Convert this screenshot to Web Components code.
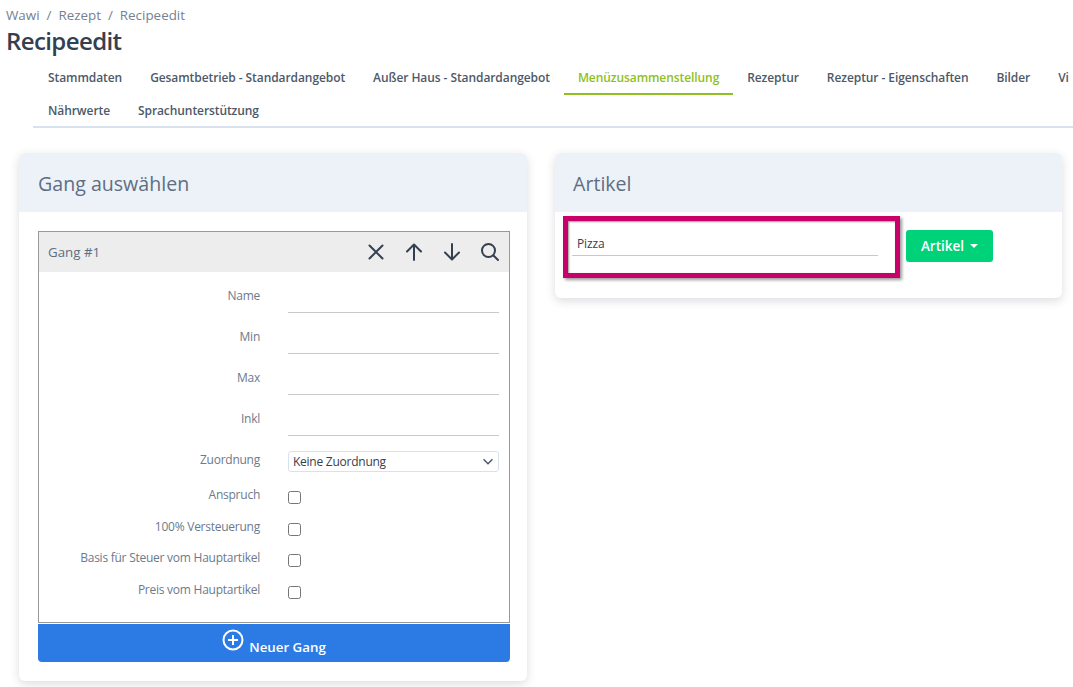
<!DOCTYPE html>
<html lang="de">
<head>
<meta charset="utf-8">
<title>Recipeedit</title>
<style>
  html, body { margin: 0; height: 100%; background: #fff; overflow: hidden; }
  body { color: #5e6e82; font-family: 'Open Sans', 'Noto Sans', Arial, sans-serif; }
</style>
</head>
<body>
<rf-page-head crumbs="Wawi / Rezept / Recipeedit" heading="Recipeedit"></rf-page-head>
<rf-tabs>
  <rf-tab>Stammdaten</rf-tab>
  <rf-tab>Gesamtbetrieb - Standardangebot</rf-tab>
  <rf-tab>Außer Haus - Standardangebot</rf-tab>
  <rf-tab active>Menüzusammenstellung</rf-tab>
  <rf-tab>Rezeptur</rf-tab>
  <rf-tab>Rezeptur - Eigenschaften</rf-tab>
  <rf-tab>Bilder</rf-tab>
  <rf-tab>Vi</rf-tab>
  <rf-tab slot="second">Nährwerte</rf-tab>
  <rf-tab slot="second">Sprachunterstützung</rf-tab>
</rf-tabs>
<rf-columns>
  <rf-card heading="Gang auswählen">
    <rf-gang heading="Gang #1">
      <rf-field label="Name"><rf-line></rf-line></rf-field>
      <rf-field label="Min"><rf-line></rf-line></rf-field>
      <rf-field label="Max"><rf-line></rf-line></rf-field>
      <rf-field label="Inkl"><rf-line></rf-line></rf-field>
      <rf-field label="Zuordnung" kind="select"><rf-select>Keine Zuordnung</rf-select></rf-field>
      <rf-field label="Anspruch" kind="check"><rf-check></rf-check></rf-field>
      <rf-field label="100% Versteuerung" kind="check"><rf-check></rf-check></rf-field>
      <rf-field label="Basis für Steuer vom Hauptartikel" kind="check"><rf-check></rf-check></rf-field>
      <rf-field label="Preis vom Hauptartikel" kind="check"><rf-check></rf-check></rf-field>
    </rf-gang>
    <rf-add-button>Neuer Gang</rf-add-button>
  </rf-card>
  <rf-card heading="Artikel" compact>
    <rf-article-search value="Pizza" action="Artikel"></rf-article-search>
  </rf-card>
</rf-columns>

<script>
  const FONT = `'Open Sans', 'Noto Sans', Arial, sans-serif`;

  // Small helper, every element below is the same shape
  function define( name, css, html, setup ) {
    customElements.define( name, class extends HTMLElement {
      constructor() {
        super();
        this.attachShadow( {mode: 'open'} );
        this.shadowRoot.innerHTML = `<style>${css}</style>${typeof html === 'function' ? html( this ) : html}`;
      }
      connectedCallback() {
        if( setup ) setup( this, this.shadowRoot );
      }
    } );
  }

  define( 'rf-page-head', `
    :host { display: flex; flex-direction: column; padding: 7px 0 0 6px; height: 55px; box-sizing: border-box; font-family: ${FONT}; }
    p { margin: 0; color: #748194; font-size: 13.400px; line-height: 17px; word-spacing: 3.500px; }
    h1 { margin: 0; color: #344050; font-size: 24px; font-weight: 600; line-height: 34px; letter-spacing: -.6px; }
  `, `<p></p><h1></h1>`, ( el, root ) => {
    root.querySelector( 'p' ).textContent = el.getAttribute( 'crumbs' );
    root.querySelector( 'h1' ).textContent = el.getAttribute( 'heading' );
  } );

  define( 'rf-tabs', `
    :host { display: block; margin: 0 0 0 33px; height: 73px; box-sizing: border-box; padding: 7px 0 0 1px; border-bottom: 2px solid #d8e2ef; overflow: hidden; }
    div { display: flex; flex-wrap: nowrap; height: 33px; white-space: nowrap; }
  `, `<div><slot></slot></div><div><slot name="second"></slot></div>` );

  define( 'rf-tab', `
    :host { display: block; flex: none; height: 33px; box-sizing: border-box; padding: 7px 14px 0; font-family: ${FONT}; font-size: 12px; font-weight: 600; line-height: 17px; letter-spacing: -.08px; color: #4d5969; }
    :host( [active] ) { color: #8fbf21; border-bottom: 2px solid #8fbf21; }
  `, `<slot></slot>` );

  define( 'rf-columns', `
    :host { display: grid; grid-template-columns: 508px 507px; column-gap: 28px; align-items: start; padding: 25px 0 0 19px; }
  `, `<slot></slot>` );

  define( 'rf-card', `
    :host { display: block; background: #fff; border-radius: 6px; box-shadow: 0 3px 10px rgba( 65, 69, 88, .18 ); overflow: hidden; font-family: ${FONT}; }
    header { height: 59px; box-sizing: border-box; background: #edf2f9; padding: 0 19px; color: #5e6e82; font-size: 19.600px; line-height: 61px; }
    section { padding: 19px 17px 19px 19px; }
    :host( [compact] ) header { padding: 0 18px; }
    :host( [compact] ) section { padding: 4px 0 20px 8px; }
  `, `<header></header><section><slot></slot></section>`, ( el, root ) => {
    root.querySelector( 'header' ).textContent = el.getAttribute( 'heading' );
  } );

  define( 'rf-gang', `
    :host { display: block; border: 1px solid #999; height: 392px; box-sizing: border-box; font-family: ${FONT}; }
    header { display: flex; align-items: center; height: 40px; background: #ededed; padding-left: 9px; color: #5e6e82; font-size: 13.300px; }
    span { flex: 1; }
    svg { display: block; width: 24px; height: 24px; margin-right: 14px; fill: none; stroke: #344050; stroke-width: 2; stroke-linecap: round; stroke-linejoin: round; }
    svg:last-child { margin-right: 7px; }
    main { display: flex; flex-direction: column; padding-top: 3px; }
  `, `<header><span></span>
      <svg viewBox="0 0 24 24"><path d="M5.5 5.5l13 13M18.500 5.500l-13 13"/></svg>
      <svg viewBox="0 0 24 24"><path d="M12 20V5M5 11.500L12 4.500l7 7"/></svg>
      <svg viewBox="0 0 24 24"><path d="M12 4v15M5 12.500l7 7 7-7"/></svg>
      <svg viewBox="0 0 24 24"><circle cx="10.500" cy="10.500" r="6.500"/><path d="M15.500 15.500L20 20"/></svg>
    </header><main><slot></slot></main>`, ( el, root ) => {
    root.querySelector( 'span' ).textContent = el.getAttribute( 'heading' );
  } );

  define( 'rf-field', `
    :host { display: grid; grid-template-columns: 221px 211px; column-gap: 28px; height: 41px; font-family: ${FONT}; }
    :host( [kind=select] ) { height: 48px; }
    :host( [kind=check] ) { height: 31.500px; }
    label { text-align: right; font-size: 12px; font-weight: 500; line-height: 16px; letter-spacing: -.25px; color: #6b7a8d; padding-top: 13px; }
    :host( [kind=check] ) label { padding-top: 0; }
  `, `<label></label><div><slot></slot></div>`, ( el, root ) => {
    root.querySelector( 'label' ).textContent = el.getAttribute( 'label' );
  } );

  define( 'rf-line', `
    :host { display: block; height: 38px; box-sizing: border-box; border-bottom: 1px solid #c9c9c9; }
  `, `` );

  define( 'rf-select', `
    :host { display: flex; align-items: center; justify-content: space-between; margin-top: 12px; height: 21px; box-sizing: border-box; border: 1px solid #d8e2ef; border-radius: 3px; padding: 0 4px; color: #344050; font-family: ${FONT}; font-size: 12px; letter-spacing: -.25px; }
    svg { width: 12px; height: 8px; fill: none; stroke: #4d5969; stroke-width: 1.700; }
  `, `<span><slot></slot></span><svg viewBox="0 0 13 9"><path d="M1.500 1.500L6.500 6.500l5-5"/></svg>` );

  define( 'rf-check', `
    :host { display: block; margin-top: 4px; width: 13px; height: 13px; box-sizing: border-box; border: 1px solid #767676; border-radius: 2.500px; }
  `, `` );

  define( 'rf-add-button', `
    :host { display: flex; justify-content: center; height: 38px; margin-top: 1px; background: #2c7be5; border-radius: 0 0 4px 4px; color: #fff; font-family: ${FONT}; font-size: 13.300px; font-weight: 600; }
    svg { width: 22px; height: 22px; margin: 5px 5px 0 0; fill: none; stroke: #fff; stroke-width: 2; }
    span { padding-top: 13px; line-height: 20px; }
  `, `<svg viewBox="0 0 22 22"><circle cx="11" cy="11" r="9.500"/><path d="M11 6v10M6 11h10"/></svg><span><slot></slot></span>` );

  define( 'rf-article-search', `
    :host { display: flex; align-items: flex-start; gap: 6px; font-family: ${FONT}; }
    .mark { width: 337px; height: 62px; box-sizing: border-box; border: 5px solid #c8006a; padding: 4px; box-shadow: 2px 2px 3px rgba( 0, 0, 0, .4 ), inset 1px 1px 2px rgba( 0, 0, 0, .4 ); }
    .input { width: 306px; height: 31px; box-sizing: border-box; border-bottom: 1px solid #c9c9c9; padding: 11px 0 0 5px; color: #344050; font-size: 12px; line-height: 16px; letter-spacing: -.1px; }
    button { display: flex; align-items: center; gap: 6px; margin: 14px 0 0; height: 32px; width: 87px; justify-content: center; border: none; border-radius: 3px; background: #00d27a; color: #fff; font: 600 13.500px ${FONT}; }
    i { border: 4px solid transparent; border-top-color: #fff; border-bottom: 0; }
  `, `<div class="mark"><div class="input"></div></div><button type="button"><span></span><i></i></button>`, ( el, root ) => {
    root.querySelector( '.input' ).textContent = el.getAttribute( 'value' );
    root.querySelector( 'button span' ).textContent = el.getAttribute( 'action' );
  } );
</script>
</body>
</html>
